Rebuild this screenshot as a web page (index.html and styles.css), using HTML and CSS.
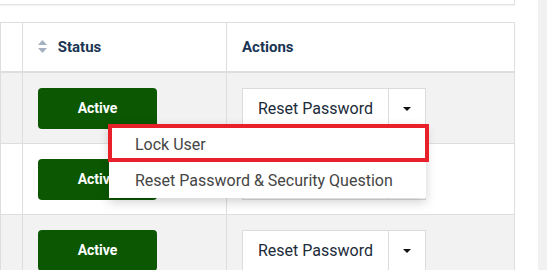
FILE: index.html
```html
<!DOCTYPE html>
<html lang="en">
<head>
  <meta charset="UTF-8">
  <meta name="viewport" content="width=device-width, initial-scale=1.0">
  <title>Users</title>
  <link rel="stylesheet" href="styles.css">
</head>
<body>
  <div class="page">
    <main class="content">
      <div class="top-card"></div>

      <table class="users">
        <thead>
          <tr>
            <th class="col-check"></th>
            <th class="col-status">
              <span class="sort">
                <svg width="9" height="13" viewBox="0 0 9 13">
                  <path d="M4.5 0 L9 5 L0 5 Z" fill="#a3b0bf"/>
                  <path d="M4.5 13 L9 8 L0 8 Z" fill="#a3b0bf"/>
                </svg>
              </span>
              Status
            </th>
            <th class="col-actions">Actions</th>
          </tr>
        </thead>
        <tbody>
          <tr class="odd">
            <td></td>
            <td><span class="badge">Active</span></td>
            <td>
              <div class="btn-group">
                <button class="btn">Reset Password</button>
                <button class="btn caret-btn"><span class="caret"></span></button>
                <ul class="dropdown">
                  <li class="item highlighted">Lock User</li>
                  <li class="item">Reset Password &amp; Security Question</li>
                </ul>
              </div>
            </td>
          </tr>
          <tr>
            <td></td>
            <td><span class="badge">Active</span></td>
            <td>
              <div class="btn-group">
                <button class="btn">Reset Password</button>
                <button class="btn caret-btn"><span class="caret"></span></button>
              </div>
            </td>
          </tr>
          <tr class="odd">
            <td></td>
            <td><span class="badge">Active</span></td>
            <td>
              <div class="btn-group">
                <button class="btn">Reset Password</button>
                <button class="btn caret-btn"><span class="caret"></span></button>
              </div>
            </td>
          </tr>
        </tbody>
      </table>
    </main>
    <div class="scroll-track"></div>
  </div>
</body>
</html>
```

FILE: styles.css
```css
body {
  margin: 0;
  padding: 0;
  background: #fff;
  font-family: Roboto, "Noto Sans", sans-serif;
  color: #1c2b39;
  overflow: hidden;
}

.page {
  display: flex;
  height: 270px;
}

.content {
  width: 538px;
}

.scroll-track {
  width: 9px;
  background: #f1f1f1;
}

.top-card {
  width: 514px;
  height: 4px;
  border-right: 1px solid #e2e2e2;
  border-bottom: 1px solid #e2e2e2;
  box-shadow: 0 1px 2px rgba(0, 0, 0, 0.06);
  margin-bottom: 17px;
}

.users {
  width: 515px;
  border-collapse: collapse;
  table-layout: fixed;
}

.users th,
.users td {
  border: 1px solid #dedede;
  padding: 0;
}

.users th {
  height: 48px;
  text-align: left;
  font-size: 15px;
  font-weight: 700;
  color: #1a3553;
  padding-left: 15px;
  border-bottom: 2px solid #dedede;
}

.users th.col-check {
  width: 21px;
  padding: 0;
}

.users th.col-status {
  width: 188px;
}

.sort {
  display: inline-block;
  vertical-align: -1px;
  margin-right: 7px;
}

.sort svg {
  display: block;
}

.users td {
  height: 70px;
  padding-left: 15px;
  vertical-align: middle;
}

.users td:first-child {
  padding: 0;
}

.users tr.odd td {
  background: #f2f2f2;
}

.badge {
  display: block;
  width: 119px;
  height: 41px;
  line-height: 41px;
  text-align: center;
  background: #0b5702;
  color: #fff;
  font-size: 14px;
  font-weight: 700;
  border-radius: 4px;
}

.btn-group {
  position: relative;
  display: inline-flex;
}

.btn {
  height: 41px;
  background: #fff;
  border: 1px solid #dcdcdc;
  font-family: inherit;
  font-size: 16px;
  color: #1c2b39;
  padding: 0 15px 0 15px;
  cursor: pointer;
}

.caret-btn {
  width: 37px;
  border-left: none;
  padding: 0;
}

.caret {
  display: inline-block;
  border-top: 4px solid #111;
  border-left: 4px solid transparent;
  border-right: 4px solid transparent;
  vertical-align: middle;
}

.dropdown {
  position: absolute;
  top: 36px;
  right: 0;
  width: 317px;
  margin: 0;
  padding: 0;
  list-style: none;
  background: #fff;
  box-shadow: 0 4px 10px rgba(0, 0, 0, 0.18);
  z-index: 2;
}

.item {
  position: relative;
  height: 36px;
  line-height: 38px;
  padding-left: 26px;
  font-size: 16px;
  color: #454545;
  white-space: nowrap;
}

.item.highlighted {
  height: 38px;
  line-height: 42px;
}

.item.highlighted::after {
  content: "";
  position: absolute;
  top: 0;
  left: -1px;
  right: -3px;
  bottom: 0;
  border: 4px solid #e8202a;
}
```
